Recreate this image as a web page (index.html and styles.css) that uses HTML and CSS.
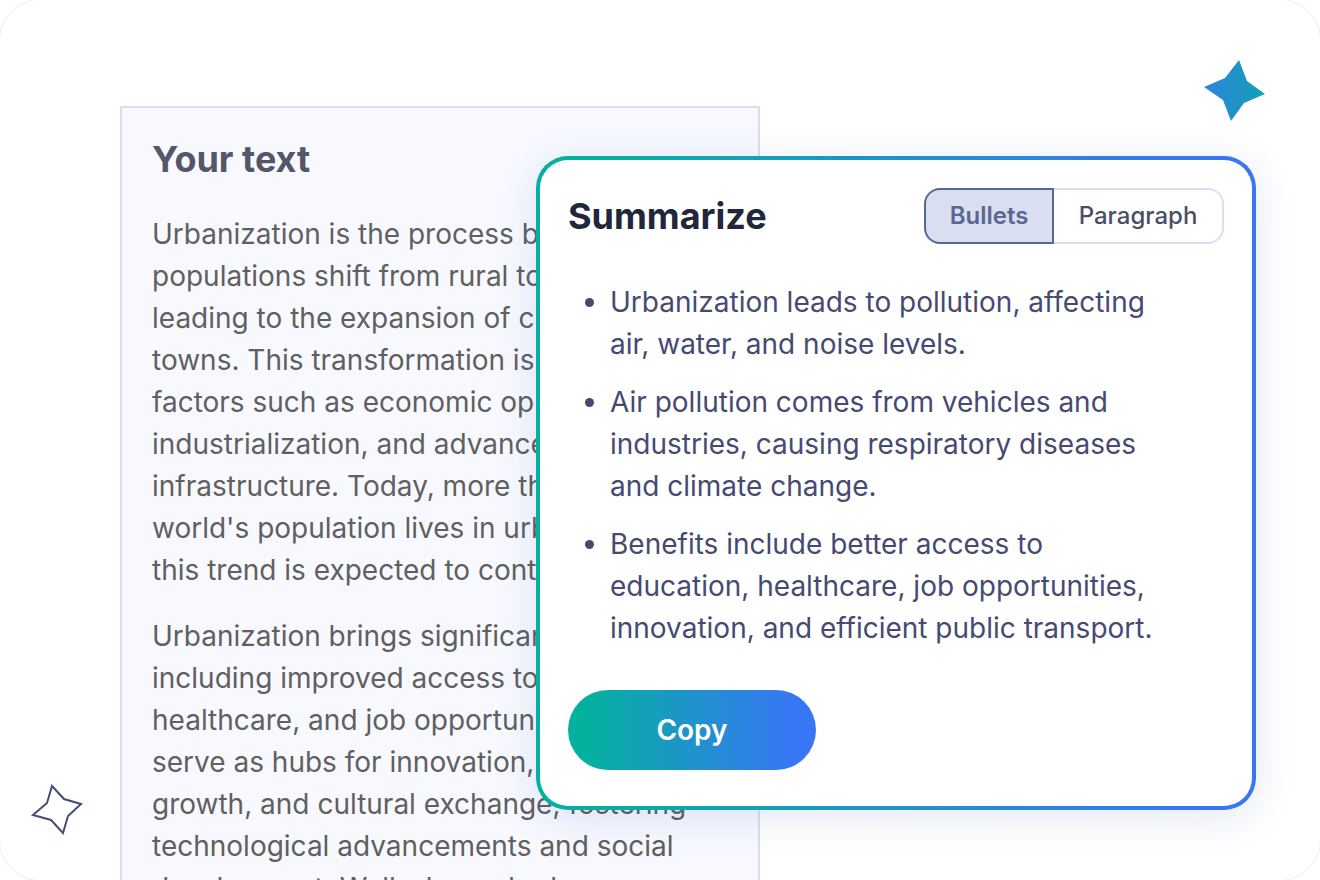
FILE: index.html
```html
<!DOCTYPE html>
<html lang="en">
<head>
    <meta charset="UTF-8">
    <meta content="width=device-width, initial-scale=1.0" name="viewport">
    <title>Summarize</title>
    <link rel="stylesheet" href="styles.css">
</head>
<body>
<main class="scene">
    <article class="source">
        <h2>Your text</h2>
        <p>Urbanization is the process by which populations shift from rural to urban areas, leading to the
            expansion of cities and towns. This transformation is driven by factors such as economic
            opportunities, industrialization, and advancements in infrastructure. Today, more than half the
            world's population lives in urban areas, and this trend is expected to continue.</p>
        <p>Urbanization brings significant benefits, including improved access to education, healthcare, and
            job opportunities. Cities serve as hubs for innovation, economic growth, and cultural exchange,
            fostering technological advancements and social development. Well-planned urban areas</p>
    </article>

    <section class="summary">
        <header class="summary-header">
            <h2>Summarize</h2>
            <div class="toggle">
                <button class="active" type="button" aria-pressed="true">Bullets</button>
                <button type="button" aria-pressed="false">Paragraph</button>
            </div>
        </header>
        <ul>
            <li>Urbanization leads to pollution, affecting air, water, and noise levels.</li>
            <li>Air pollution comes from vehicles and industries, causing respiratory diseases and climate
                change.</li>
            <li>Benefits include better access to education, healthcare, job opportunities, innovation, and
                efficient public transport.</li>
        </ul>
        <button class="copy" type="button">Copy</button>
    </section>

    <!-- Decorative stars -->
    <svg class="star star-filled" viewBox="0 0 62 62" aria-hidden="true">
        <defs>
            <linearGradient id="starFill" x1="0" y1="0" x2="1" y2="0">
                <stop offset="0" stop-color="#3280e4"/>
                <stop offset="0.4" stop-color="#2091cb"/>
                <stop offset="0.6" stop-color="#1f93c8"/>
                <stop offset="1" stop-color="#0aa8ab"/>
            </linearGradient>
        </defs>
        <path d="M35 0L43 21L61 34L40 43L27 61L19 40L0 27L21 18Z" fill="url(#starFill)"/>
    </svg>
    <svg class="star star-outline" viewBox="0 0 54 54" aria-hidden="true">
        <path d="M22 3L34 16L51 21L38 33L33 50L21 37L3 32L17 20Z" fill="none" stroke="#464c77" stroke-width="2"/>
    </svg>
</main>
</body>
</html>
```
FILE: styles.css
```css
body {
    margin: 0;
    font-family: Inter, "Liberation Sans", sans-serif;
    background-color: #fff;
}

h2 {
    margin: 0;
    font-size: 36px;
    line-height: 44px;
    font-weight: 700;
}

button {
    font-family: inherit;
    cursor: pointer;
}

/* The two cards share the middle column, so the summary overlaps the text */
.scene {
    position: relative;
    display: grid;
    grid-template-columns: 120px 416fr 224fr 496fr 64px;
    align-items: start;
    height: 100vh;
    overflow: hidden;
    border-radius: 40px;
    box-shadow: 0 0 0 1px #f1f1f6; /* Faint line round the corners */
}

.source {
    grid-column: 2 / 4;
    grid-row: 1;
    margin-top: 106px;
    padding: 29px 30px;
    border: 2px solid #d9dff0;
    background-color: #f8f9ff;
    color: #606060;
}

.source h2 {
    margin-bottom: 32px;
    color: #545669;
}

.source p {
    margin: 0 0 24px;
    font-size: 28px;
    line-height: 42px;
}

.summary {
    grid-column: 3 / 5;
    grid-row: 1;
    margin-top: 156px;
    padding: 28px 28px 36px;
    border: 4px solid transparent;
    border-radius: 32px;
    background: linear-gradient(#fff, #fff) padding-box,
        linear-gradient(90deg, #04b19f 8%, #1f93cb 50%, #3876f6 92%) border-box;
    box-shadow: 0 8px 40px rgba(50, 85, 170, 0.14);
}

.summary-header {
    display: flex;
    align-items: center;
    justify-content: space-between;
}

.summary-header h2 {
    color: #21263b;
}

.toggle {
    display: flex;
}

.toggle button {
    min-width: 170px;
    height: 56px;
    padding: 0 22px;
    border: 2px solid #d9dff0;
    border-left: 0;
    border-radius: 0 16px 16px 0;
    background-color: #fff;
    color: #4b4e63;
    font-size: 24px;
    line-height: 28px;
    font-weight: 500;
}

.toggle .active {
    min-width: 130px;
    border: 2px solid #5c6694;
    border-radius: 16px 0 0 16px;
    background-color: #d9dff1;
    color: #5c6694;
    font-weight: 600;
}

.summary ul {
    margin: 37px 0 41px;
    padding: 0 60px 0 42px;
    color: #464a73;
    font-size: 28px;
    line-height: 42px;
}

.summary li + li {
    margin-top: 16px;
}

.copy {
    display: block;
    width: 248px;
    height: 80px;
    border: 0;
    border-radius: 40px;
    background: linear-gradient(90deg, #04b19f 8%, #1f93cb 50%, #3876f6 92%);
    color: #fff;
    font-size: 28px;
    font-weight: 600;
}

.star {
    position: absolute;
}

.star-filled {
    top: 60px;
    right: 54px;
    width: 62px;
}

.star-outline {
    left: 30px;
    bottom: 43px;
    width: 54px;
}
```
